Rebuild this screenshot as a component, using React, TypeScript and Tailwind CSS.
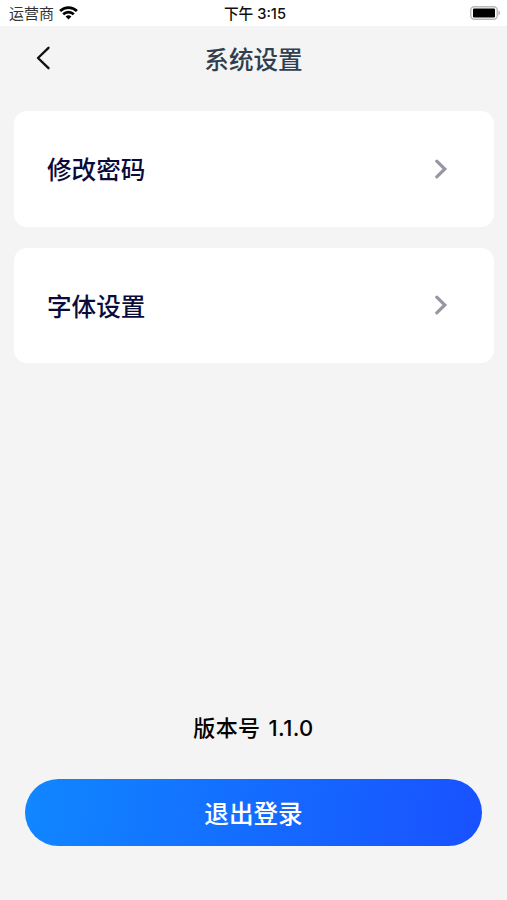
const items = ["修改密码", "字体设置"];

function StatusBar() {
  return (
    <div className="h-[26px] bg-white grid grid-cols-3 items-center pl-[9px] pr-[6px]">
      <div className="flex items-center gap-[5px]">
        <span className="pt-[2px] text-[15px] leading-[24px] text-[#333]">运营商</span>
        <svg width="19" height="14" viewBox="0 0 19 14" fill="none" stroke="#000" strokeWidth="2.7">
          <path d="M1.1 5a12 12 0 0 1 16.8 0" />
          <path d="M4.2 8.3a7.6 7.6 0 0 1 10.6 0" />
          <path d="M9.5 13.5 6.6 10.6a4.1 4.1 0 0 1 5.8 0Z" fill="#000" stroke="none" />
        </svg>
      </div>
      <span className="pt-[2px] text-center text-[14.7px] font-medium leading-[24px] text-[#111]">下午 3:15</span>
      <svg className="justify-self-end" width="31" height="14" viewBox="0 0 31 14">
        <rect x="0.75" y="0.75" width="26.5" height="12.5" rx="3.5" fill="none" stroke="#b8b8b8" strokeWidth="1.4" />
        <rect x="3" y="2.5" width="22" height="9" rx="1" fill="#000" />
        <path d="M28.4 4.6c2.4 1 2.4 3.8 0 4.8Z" fill="#b8b8b8" />
      </svg>
    </div>
  );
}

export default function App() {
  return (
    <div className={`w-[507px] h-[900px] bg-[#f4f4f4] flex flex-col font-["Inter","Noto_Sans_CJK_SC",sans-serif]`}>
      <StatusBar />

      {/* Header */}
      <div className="h-[64px] grid grid-cols-3 items-center">
        <svg className="ml-[35px]" width="16" height="24" viewBox="0 0 16 24" fill="none" stroke="#111" strokeWidth="2.4" strokeLinecap="round" strokeLinejoin="round">
          <path d="M13.5 1.8 3 12l10.5 10.2" />
        </svg>
        <h1 className="pt-[4px] text-center text-[24.6px] font-medium text-[#303f4f]">系统设置</h1>
      </div>

      {/* Settings */}
      <div className="flex flex-col gap-[21px] pt-[21px] pl-[14px] pr-[13px]">
        {items.map((label) => (
          <button key={label} className="h-[115.5px] bg-white rounded-[13px] flex items-center justify-between pl-[33px] pr-[46px]">
            <span className="pt-[4px] text-[24.6px] font-medium text-[#0b0b3b]">{label}</span>
            <svg width="14" height="20" viewBox="0 0 14 20" fill="none" stroke="#9797a3" strokeWidth="3.2" strokeLinecap="round">
              <path d="m2.8 2.2 8 7.8-8 7.8" />
            </svg>
          </button>
        ))}
      </div>

      {/* Version and logout */}
      <div className="mt-auto px-[25px] pb-[54px] text-center">
        <p className="mb-[34px] text-[22px] font-medium leading-[34px] tracking-[0.35px] [word-spacing:2px] text-black">
          版本号 1.1.0
        </p>
        <button className="w-full h-[67px] pt-[3px] rounded-full bg-linear-[100deg] from-[#1087ff] to-[#1951ff] text-white text-[24.6px] font-medium">
          退出登录
        </button>
      </div>
    </div>
  );
}
